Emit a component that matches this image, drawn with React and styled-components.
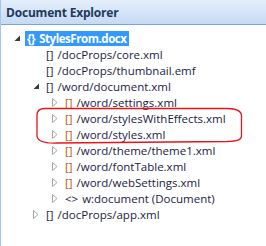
import * as React from "react";
import styled, { createGlobalStyle } from "styled-components";

const GlobalStyle = createGlobalStyle`
  html, body {
    margin: 0;
    padding: 0;
    background: #ffffff;
  }
`;

const nodes = [
  { depth: 0, state: "open", icon: "{}", label: "StylesFrom.docx", selected: true },
  { depth: 1, icon: "[]", label: "/docProps/core.xml" },
  { depth: 1, icon: "[]", label: "/docProps/thumbnail.emf" },
  { depth: 1, state: "open", icon: "[]", label: "/word/document.xml" },
  { depth: 2, state: "closed", icon: "[]", part: true, label: "/word/settings.xml" },
  { depth: 2, state: "closed", icon: "[]", part: true, label: "/word/stylesWithEffects.xml" },
  { depth: 2, state: "closed", icon: "[]", part: true, label: "/word/styles.xml" },
  { depth: 2, state: "closed", icon: "[]", part: true, label: "/word/theme/theme1.xml" },
  { depth: 2, state: "closed", icon: "[]", part: true, label: "/word/fontTable.xml" },
  { depth: 2, state: "closed", icon: "[]", part: true, label: "/word/webSettings.xml" },
  { depth: 2, state: "closed", icon: "<>", label: "w:document (Document)" },
  { depth: 1, state: "closed", icon: "[]", label: "/docProps/app.xml" },
];

const Expander = ({ state }) => {
  if (state === "open") {
    return (
      <ExpanderBox>
        <svg width="7" height="7" viewBox="0 0 7 7">
          <path d="M6 0.5 L6 6 L0.5 6 Z" fill="#3a3a3a" />
        </svg>
      </ExpanderBox>
    );
  }
  if (state === "closed") {
    return (
      <ExpanderBox>
        <svg width="6" height="9" viewBox="0 0 6 9">
          <path d="M0.5 0.5 L5 4.5 L0.5 8.5 Z" fill="#ffffff" stroke="#a6a6a6" strokeWidth="1" />
        </svg>
      </ExpanderBox>
    );
  }
  return <ExpanderBox />;
};

const App = () => {
  return (
    <>
      <GlobalStyle />
      <Panel>
        <Header>Document Explorer</Header>
        <Tree>
          {nodes.map((n, i) => (
            <Row key={i} $depth={n.depth}>
              <Expander state={n.state} />
              <Label $selected={n.selected}>
                <Icon $part={n.part} $selected={n.selected}>
                  {n.icon}
                </Icon>
                {n.label}
              </Label>
            </Row>
          ))}
        </Tree>
        <Annotation width="266" height="246" viewBox="0 0 266 246">
          <path
            d="M44 108.5 L226 108.5 C234 108.5 240.5 110 240.5 116 L240.5 136 C240.5 140 236 141 226 141.5 L56 143 C44 143.5 36.5 141 36 136 L36 115 C36 111 39 108.5 44 108.5 Z"
            fill="none"
            stroke="#e8141c"
            strokeWidth="1.3"
          />
        </Annotation>
      </Panel>
    </>
  );
};

const Panel = styled.div`
  position: relative;
  width: 266px;
  height: 246px;
  box-sizing: border-box;
  border-left: 1px solid #a7c3e6;
  background: #ffffff;
  font-family: "Open Sans", "Noto Sans", sans-serif;
  overflow: hidden;
`;

const Header = styled.div`
  height: 25px;
  box-sizing: border-box;
  padding-left: 5px;
  display: flex;
  align-items: center;
  background: linear-gradient(#e4eefb, #c5daf5);
  border-bottom: 1px solid #7fa3d4;
  color: #1e395b;
  font-size: 12px;
  font-weight: 700;
  letter-spacing: -0.2px;
`;

const Tree = styled.div`
  display: flex;
  flex-direction: column;
  padding-top: 5px;
`;

const Row = styled.div`
  display: flex;
  align-items: center;
  height: 16px;
  padding-left: ${(p) => 8 + p.$depth * 19}px;
`;

const ExpanderBox = styled.div`
  width: 16px;
  height: 16px;
  display: flex;
  align-items: center;
  justify-content: center;
`;

const Label = styled.div`
  display: flex;
  align-items: center;
  height: ${(p) => (p.$selected ? "15px" : "16px")};
  padding: 0 2px;
  white-space: nowrap;
  font-size: 11.5px;
  color: ${(p) => (p.$selected ? "#ffffff" : "#1b1b3f")};
  background: ${(p) => (p.$selected ? "#3399ff" : "transparent")};
  font-weight: ${(p) => (p.$selected ? 700 : 400)};
  letter-spacing: ${(p) => (p.$selected ? "-0.45px" : "0")};
`;

const Icon = styled.span`
  margin-right: 4px;
  color: ${(p) => (p.$selected ? "#ffffff" : p.$part ? "#b85a00" : "#1b1b3f")};
`;

const Annotation = styled.svg`
  position: absolute;
  left: 0;
  top: 0;
  pointer-events: none;
`;

export default App;
